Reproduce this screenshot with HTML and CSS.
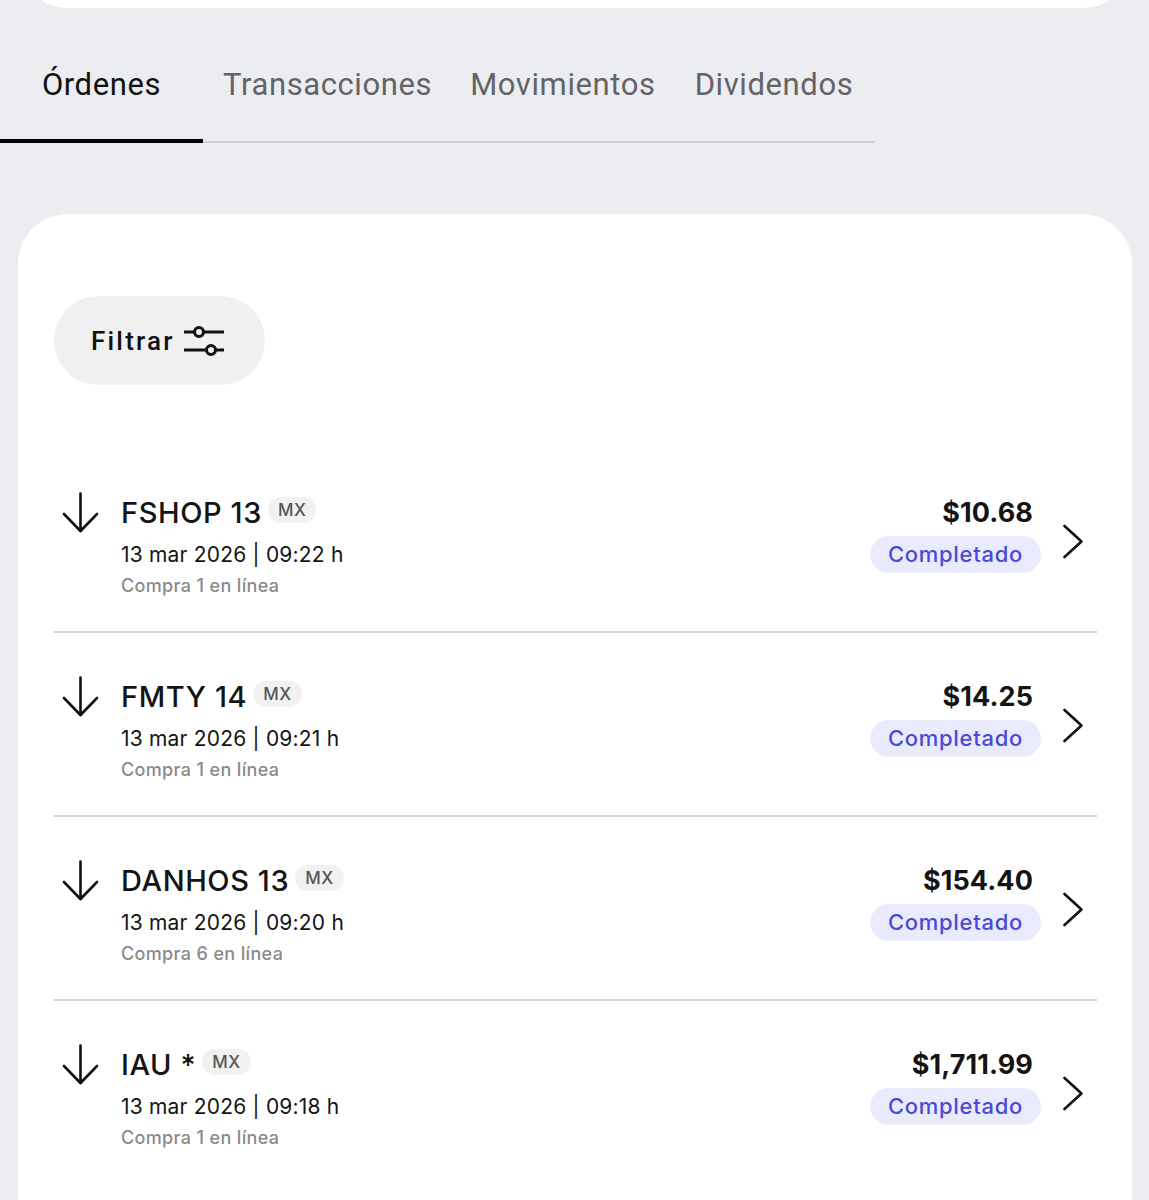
FILE: index.html
```html
<!DOCTYPE html>
<html lang="es">
<head>
  <meta charset="UTF-8">
  <meta name="viewport" content="width=device-width, initial-scale=1.0">
  <title>Órdenes</title>
  <link rel="stylesheet" href="styles.css">
</head>
<body>

  <!-- borde inferior de la tarjeta anterior -->
  <div class="top-clip">
    <div class="prev-card"></div>
  </div>

  <nav class="tabs">
    <a class="tab active">Órdenes</a>
    <a class="tab">Transacciones</a>
    <a class="tab">Movimientos</a>
    <a class="tab">Dividendos</a>
  </nav>

  <section class="card">
    <button class="filter-btn">
      <span>Filtrar</span>
      <svg width="42" height="32" viewBox="0 0 42 32" fill="none" stroke="#111" stroke-width="3">
        <line x1="1" y1="7" x2="41" y2="7"/>
        <circle cx="16" cy="7" r="4.5" fill="#f0f0f0"/>
        <line x1="1" y1="25" x2="41" y2="25"/>
        <circle cx="28" cy="25" r="4.5" fill="#f0f0f0"/>
      </svg>
    </button>

    <ul class="orders">
      <li class="order">
        <svg class="arrow" width="37" height="41" viewBox="0 0 37 41" fill="none" stroke="#111" stroke-width="2.6" stroke-linecap="round" stroke-linejoin="round">
          <line x1="18.5" y1="1.5" x2="18.5" y2="39"/>
          <polyline points="2,22 18.5,39 35,22"/>
        </svg>
        <div class="info">
          <div class="title-line">
            <span class="ticker">FSHOP 13</span>
            <span class="market">MX</span>
          </div>
          <div class="date">13 mar 2026 | 09:22 h</div>
          <div class="desc">Compra 1 en línea</div>
        </div>
        <div class="amount">
          <div class="price">$10.68</div>
          <div class="status">Completado</div>
        </div>
        <svg class="chevron" width="22" height="35" viewBox="0 0 22 35" fill="none" stroke="#111" stroke-width="2.6" stroke-linecap="round" stroke-linejoin="round">
          <polyline points="2.5,2 19.5,17.5 2.5,33"/>
        </svg>
      </li>

      <li class="order">
        <svg class="arrow" width="37" height="41" viewBox="0 0 37 41" fill="none" stroke="#111" stroke-width="2.6" stroke-linecap="round" stroke-linejoin="round">
          <line x1="18.5" y1="1.5" x2="18.5" y2="39"/>
          <polyline points="2,22 18.5,39 35,22"/>
        </svg>
        <div class="info">
          <div class="title-line">
            <span class="ticker">FMTY 14</span>
            <span class="market">MX</span>
          </div>
          <div class="date">13 mar 2026 | 09:21 h</div>
          <div class="desc">Compra 1 en línea</div>
        </div>
        <div class="amount">
          <div class="price">$14.25</div>
          <div class="status">Completado</div>
        </div>
        <svg class="chevron" width="22" height="35" viewBox="0 0 22 35" fill="none" stroke="#111" stroke-width="2.6" stroke-linecap="round" stroke-linejoin="round">
          <polyline points="2.5,2 19.5,17.5 2.5,33"/>
        </svg>
      </li>

      <li class="order">
        <svg class="arrow" width="37" height="41" viewBox="0 0 37 41" fill="none" stroke="#111" stroke-width="2.6" stroke-linecap="round" stroke-linejoin="round">
          <line x1="18.5" y1="1.5" x2="18.5" y2="39"/>
          <polyline points="2,22 18.5,39 35,22"/>
        </svg>
        <div class="info">
          <div class="title-line">
            <span class="ticker">DANHOS 13</span>
            <span class="market">MX</span>
          </div>
          <div class="date">13 mar 2026 | 09:20 h</div>
          <div class="desc">Compra 6 en línea</div>
        </div>
        <div class="amount">
          <div class="price">$154.40</div>
          <div class="status">Completado</div>
        </div>
        <svg class="chevron" width="22" height="35" viewBox="0 0 22 35" fill="none" stroke="#111" stroke-width="2.6" stroke-linecap="round" stroke-linejoin="round">
          <polyline points="2.5,2 19.5,17.5 2.5,33"/>
        </svg>
      </li>

      <li class="order">
        <svg class="arrow" width="37" height="41" viewBox="0 0 37 41" fill="none" stroke="#111" stroke-width="2.6" stroke-linecap="round" stroke-linejoin="round">
          <line x1="18.5" y1="1.5" x2="18.5" y2="39"/>
          <polyline points="2,22 18.5,39 35,22"/>
        </svg>
        <div class="info">
          <div class="title-line">
            <span class="ticker">IAU *</span>
            <span class="market">MX</span>
          </div>
          <div class="date">13 mar 2026 | 09:18 h</div>
          <div class="desc">Compra 1 en línea</div>
        </div>
        <div class="amount">
          <div class="price">$1,711.99</div>
          <div class="status">Completado</div>
        </div>
        <svg class="chevron" width="22" height="35" viewBox="0 0 22 35" fill="none" stroke="#111" stroke-width="2.6" stroke-linecap="round" stroke-linejoin="round">
          <polyline points="2.5,2 19.5,17.5 2.5,33"/>
        </svg>
      </li>
    </ul>
  </section>

</body>
</html>
```

FILE: styles.css
```css
body {
  margin: 0;
  background: #ecedf1;
  font-family: Inter, "Noto Sans", sans-serif;
  color: #141414;
}
.top-clip {
  height: 8px;
  overflow: hidden;
  display: flex;
  align-items: flex-end;
  padding: 0 17px 0 18px;
}
.prev-card {
  flex: 1;
  flex-shrink: 0;
  height: 60px;
  background: #fff;
  border-radius: 0 0 50px 50px;
}
.tabs {
  display: flex;
  width: 875px;
}
.tab {
  font-family: Roboto, sans-serif;
  font-size: 31px;
  letter-spacing: 0.6px;
  line-height: 40px;
  color: #636368;
  padding: 57px 20px 36px;
  border-bottom: 2px solid #cfd0d4;
  text-align: center;
  white-space: nowrap;
}
.tab:nth-child(3) {
  padding-left: 18px;
}
.tab:last-child {
  flex: 1;
  text-align: left;
  padding-left: 19px;
}
.tab.active {
  color: #111;
  flex-shrink: 0;
  width: 203px;
  padding-left: 0;
  padding-right: 0;
  padding-bottom: 34px;
  border-bottom: 4px solid #000;
}
.card {
  background: #fff;
  margin: 71px 17px 0 18px;
  border-radius: 50px 50px 0 0;
  padding: 82px 35px 40px 36px;
}
.filter-btn {
  display: flex;
  align-items: center;
  gap: 8px;
  height: 89px;
  width: 211px;
  padding: 0 0 0 37px;
  border: none;
  border-radius: 45px;
  background: #f0f0f0;
  font-family: Roboto, sans-serif;
  font-size: 26px;
  font-weight: 500;
  letter-spacing: 2.2px;
  color: #111;
  cursor: pointer;
}
.orders {
  list-style: none;
  margin: 64px 0 0;
  padding: 0;
}
.order {
  display: flex;
  align-items: flex-start;
  padding: 43px 13px 33px 8px;
  border-bottom: 2px solid #d5d5d5;
}
.arrow {
  flex-shrink: 0;
}
.info {
  flex: 1;
  margin: 3px 0 0 22px;
}
.title-line {
  display: flex;
  align-items: flex-start;
  gap: 6px;
}
.ticker {
  font-size: 29px;
  font-weight: 500;
  line-height: 36px;
  letter-spacing: 0.6px;
}
.market {
  margin-top: 2px;
  height: 26px;
  line-height: 26px;
  padding: 0 10px;
  border-radius: 13px;
  background: #f1f1f1;
  color: #555;
  font-size: 17px;
  font-weight: 500;
  letter-spacing: 0.5px;
}
.date {
  margin-top: 10px;
  font-size: 21px;
  line-height: 28px;
  letter-spacing: 0.2px;
}
.desc {
  margin-top: 5px;
  font-size: 18px;
  line-height: 24px;
  font-weight: 500;
  color: #8a8a8a;
  letter-spacing: 0.35px;
}
.amount {
  display: flex;
  flex-direction: column;
  align-items: flex-end;
  margin-top: 3px;
}
.price {
  font-size: 27px;
  font-weight: 700;
  line-height: 36px;
  letter-spacing: 0.1px;
  margin-right: 8px;
}
.status {
  margin-top: 5px;
  height: 37px;
  line-height: 37px;
  padding: 0 18px;
  border-radius: 19px;
  background: #e9eafc;
  color: #4a4ad6;
  font-size: 22px;
  font-weight: 500;
  letter-spacing: 0.7px;
}
.chevron {
  flex-shrink: 0;
  margin: 32px 0 0 21px;
}
.order:last-child {
  border-bottom: none;
}
```
